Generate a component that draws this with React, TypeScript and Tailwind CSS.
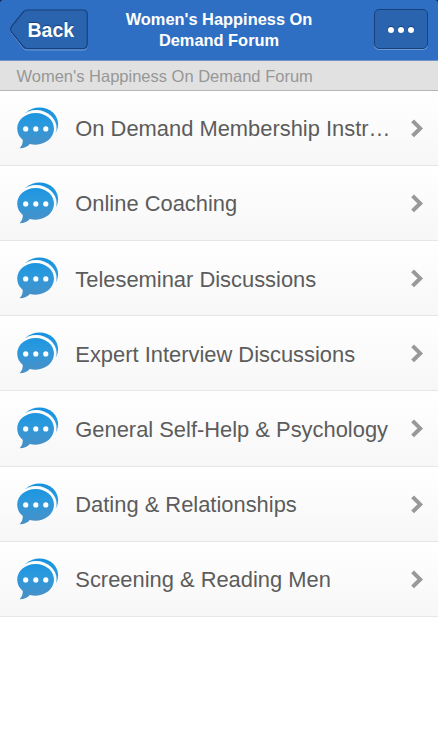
const forums = [
    "On Demand Membership Instr…",
    "Online Coaching",
    "Teleseminar Discussions",
    "Expert Interview Discussions",
    "General Self-Help & Psychology",
    "Dating & Relationships",
    "Screening & Reading Men",
];

function ChatIcon({ id }: { id: string }) {
    return (
        <svg width="42" height="42" viewBox="0 0 42 42" className="shrink-0">
            <defs>
                <linearGradient id={id} gradientUnits="userSpaceOnUse" x1="0" y1="0" x2="0" y2="42">
                    <stop offset="0" stopColor="#1592e0" />
                    <stop offset="0.4" stopColor="#2a99de" />
                    <stop offset="1" stopColor="#4b8fc4" />
                </linearGradient>
                <mask id={`${id}-gap`}>
                    <rect width="42" height="42" fill="white" />
                    <ellipse cx="19.2" cy="21.3" rx="20.4" ry="18.2" fill="black" />
                </mask>
            </defs>
            <ellipse cx="22.5" cy="17.2" rx="18.6" ry="16.8" fill={`url(#${id})`} mask={`url(#${id}-gap)`} />
            <path
                d="M18.6 5.9C8.4 5.9 0.2 12.8 0.2 21.6C0.2 26.3 2.2 30.2 5.8 33C5.8 36.4 4.7 39.2 2.6 41.3C7.4 41.2 10.8 39.6 12.8 37C14.6 37.5 16.6 37.7 18.6 37.7C28.9 37.7 37 30.5 37 21.6C37 12.8 28.9 5.9 18.6 5.9Z"
                fill={`url(#${id})`}
            />
            <circle cx="8.7" cy="21.9" r="2.6" fill="white" />
            <circle cx="18.8" cy="21.9" r="2.6" fill="white" />
            <circle cx="28.8" cy="21.9" r="2.6" fill="white" />
        </svg>
    );
}

function ForumRow({ name, index }: { name: string; index: number }) {
    return (
        <li className="flex h-[75.2px] items-center border-b border-[#e6e6e6] bg-gradient-to-b from-white to-[#f7f7f7] pl-[17px] pr-[14px]">
            <ChatIcon id={`bubble-${index}`} />
            <span className="ml-[16.3px] whitespace-nowrap pt-[3px] text-[21.9px] leading-[30px] text-[#5c5c5c]">{name}</span>
            <svg width="14" height="20" viewBox="0 0 14 20" className="ml-auto shrink-0">
                <path d="M2.6 2.9L10.2 10.4L2.6 17.9" fill="none" stroke="#999999" strokeWidth="4" />
            </svg>
        </li>
    );
}

export default function App() {
    return (
        <div className="flex h-[750px] w-[438px] flex-col bg-white font-['Liberation_Sans',Arial,sans-serif]">
            <div className="shrink-0 bg-[#0b1a30]">
                <header className="grid h-[61px] grid-cols-[1fr_200px_1fr] items-start rounded-t-[3px] border-b border-[#7195c8] bg-[#2f6fc3] px-[9px] pt-[9px]">
                    <button className="relative flex h-[42px] w-[80px] items-center pl-[18.5px] pt-[1px]">
                        <svg width="80" height="42" viewBox="0 0 80 42" className="absolute left-0 top-0">
                            <path
                                d="M18 2H74Q78.3 2 78.3 6.3V36.7Q78.3 41 74 41H18Q15.5 41 13.8 38.6L2.4 24Q1 21.5 2.4 19L13.8 4.4Q15.5 2 18 2Z"
                                fill="none"
                                stroke="#6d9bd7"
                                strokeWidth="1"
                            />
                            <path
                                d="M18 1H74Q78.3 1 78.3 5.3V35.2Q78.3 39.5 74 39.5H18Q15.5 39.5 13.8 37.2L2.2 22.6Q0.8 20.2 2.2 17.9L13.8 3.3Q15.5 1 18 1Z"
                                fill="#2a64ae"
                                stroke="#17417b"
                                strokeWidth="1.2"
                            />
                        </svg>
                        <span className="relative pt-px text-[19.5px] font-bold leading-none text-white [text-shadow:0_-1px_1px_#173e73]">Back</span>
                    </button>
                    <h1 className="text-center text-[16.4px] font-bold leading-[21px] text-white">
                        Women's Happiness On Demand Forum
                    </h1>
                    <button className="mr-px flex h-[40px] w-[54px] items-center justify-center gap-[4px] justify-self-end rounded-[5px] border border-[#17417b] bg-[#2a64ae] pt-[2px] shadow-[0_1px_0_#6d9bd7]">
                        {[0, 1, 2].map((dot) => (
                            <span key={dot} className="h-[6px] w-[6px] rounded-full bg-white shadow-[0_-1px_1px_#173e73]" />
                        ))}
                    </button>
                </header>
            </div>
            <h2 className="h-[29.6px] shrink-0 border-b border-[#b5b5b5] bg-[#e1e1e1] pl-[16.5px] pt-px text-[16.5px] leading-[28px] text-[#979797]">
                Women's Happiness On Demand Forum
            </h2>
            <ul>
                {forums.map((name, index) => (
                    <ForumRow key={name} name={name} index={index} />
                ))}
            </ul>
        </div>
    );
}
